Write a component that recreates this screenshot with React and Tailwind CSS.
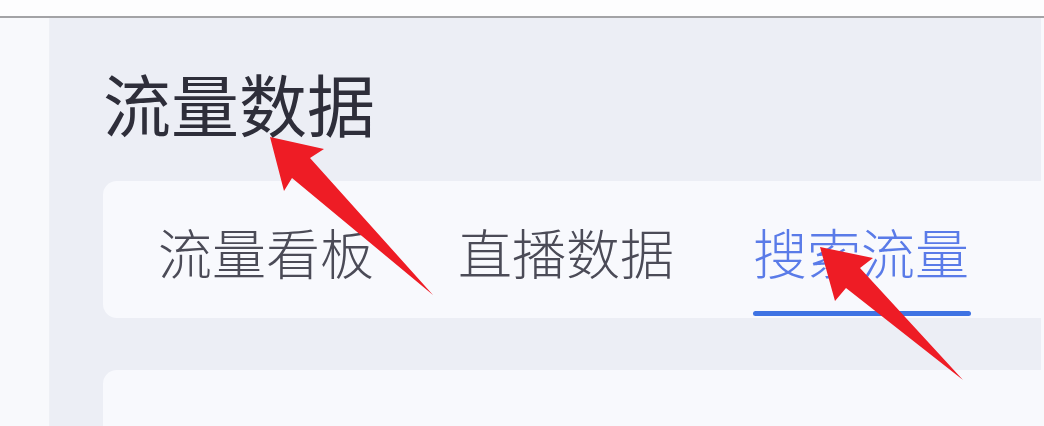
export default function App() {
  const cjk = { fontFamily: '"Noto Sans CJK SC", "Noto Sans", sans-serif' };
  return (
    <div className="relative w-[1044px] h-[426px] overflow-hidden bg-white flex flex-col" style={cjk}>
      <div className="h-[16px] bg-[#fdfdfe]" />
      <div className="h-[2px] bg-[#a3a3a6]" />
      <div className="flex flex-1 min-h-0">
        <div className="w-[50px] bg-[#f8f9fc] border-r border-[#eef0f5]" />
        <div className="flex-1 bg-[#eceef5] pl-[53px] flex flex-col">
          <div className="mt-[51px] text-[68px] leading-none text-[#2e2e3a]">流量数据</div>
          <div className="mt-[44px] h-[137px] bg-[#f8f9fd] rounded-l-[14px] flex pl-[55px] pt-[44px]">
            <div className="text-[54px] leading-none font-light text-[#4b4b57]">流量看板</div>
            <div className="ml-[84px] text-[54px] leading-none font-light text-[#4b4b57]">直播数据</div>
            <div className="ml-[79px] flex flex-col">
              <div className="text-[54px] leading-none font-light text-[#5a7be8]">搜索流量</div>
              <div className="mt-[32px] h-[5px] w-[218px] rounded-full bg-[#3f73e3]" />
            </div>
          </div>
          <div className="mt-[52px] flex-1 bg-[#f8f9fd] rounded-tl-[14px]" />
        </div>
        <div className="w-[3px] bg-[#f8f9fc]" />
      </div>
      <svg className="absolute top-0 left-0 pointer-events-none" width="1044" height="426" viewBox="0 0 1044 426">
        <polygon points="270,137 324,149 310,158 433,295 292,178 284,191" fill="#ee1c25" />
        <polygon points="820,247 873,258 860,268 963,380 846,288 835,301" fill="#ee1c25" />
      </svg>
    </div>
  );
}
